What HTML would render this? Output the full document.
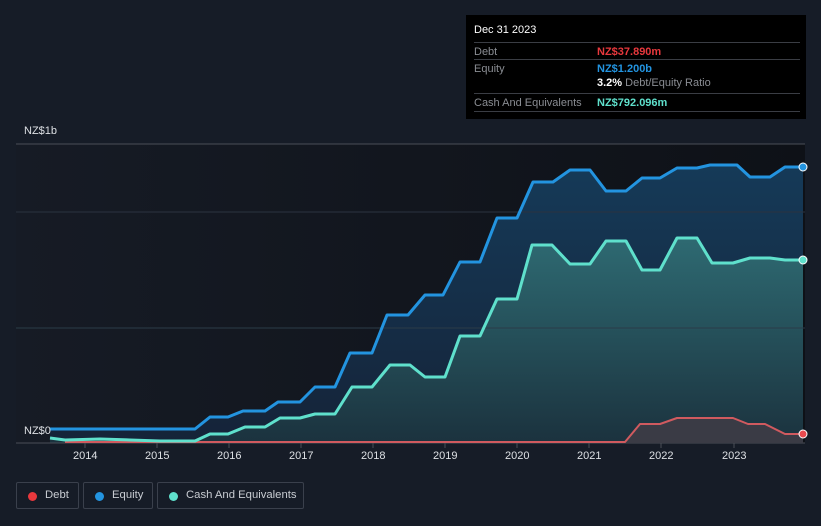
<!DOCTYPE html>
<html><head><meta charset="utf-8"><style>
html,body{margin:0;width:821px;height:526px;overflow:hidden}
body{background:#161c27;font-family:"Liberation Sans",sans-serif;position:relative}
.tt{position:absolute;left:466px;top:15px;width:340px;height:104px;background:#000;font-size:11px}
.tt .r{position:absolute;left:8px;right:6px;border-top:1px solid #3a3d44;height:18px}
.lab{color:#8a8d93;position:absolute;left:0;top:3px}
.val{position:absolute;left:123px;top:3px;font-weight:bold}
.lg{position:absolute;top:482px;height:27px;border:1px solid #3a404c;border-radius:2px;color:#c8ccd2;font-size:11.3px;line-height:25px;box-sizing:border-box;white-space:nowrap}
.lg i{position:absolute;left:11px;top:9px;width:9px;height:9px;border-radius:50%}
.ax{position:absolute;top:450px;color:#dde0e4;font-size:11px}
</style></head><body>
<svg width="821" height="526" style="position:absolute;left:0;top:0">
<defs>
<linearGradient id="bg" x1="0" x2="1" y1="0" y2="0"><stop offset="0" stop-color="#161b25"/><stop offset="1" stop-color="#0e1117"/></linearGradient>
<linearGradient id="eq" x1="0" y1="0" x2="0" y2="1"><stop offset="0" stop-color="#153a58"/><stop offset="1" stop-color="#152338"/></linearGradient>
<linearGradient id="cs" x1="0" y1="0" x2="0" y2="1"><stop offset="0" stop-color="#2e6a72"/><stop offset="1" stop-color="#1b323e"/></linearGradient>
</defs>
<rect x="16" y="144" width="789" height="299" fill="url(#bg)"/>
<path d="M50,429 L195,429 L210,417 L228,417 L243,411 L265,411 L278,402 L300,402 L315,387 L335,387 L350,353 L372,353 L387,315 L408,315 L425,295 L443,295 L460,262 L480,262 L497,218 L517,218 L533,182 L553,182 L570,170 L590,170 L606,191 L626,191 L642,178 L660,178 L677,168 L697,168 L710,165 L737,165 L750,177 L770,177 L785,167 L803,167 L803,443 L50,443Z" fill="url(#eq)"/>
<path d="M50,438 L65,440 L100,439 L130,440 L160,441 L195,441 L210,434 L228,434 L245,427 L265,427 L280,418 L300,418 L315,414 L335,414 L352,387 L372,387 L390,365 L410,365 L425,377 L445,377 L460,336 L480,336 L497,299 L517,299 L532,245 L552,245 L570,264 L590,264 L606,241 L626,241 L642,270 L660,270 L677,238 L697,238 L712,263 L733,263 L750,258 L770,258 L785,260 L803,260 L803,443 L50,443Z" fill="url(#cs)"/>
<line x1="16" y1="144" x2="805" y2="144" stroke="#4a4e57"/>
<line x1="16" y1="212" x2="805" y2="212" stroke="#2b3340"/>
<line x1="16" y1="328" x2="805" y2="328" stroke="#2b3c48"/>
<line x1="16" y1="443" x2="805" y2="443" stroke="#4a4e57"/>
<path d="M640,424 L660,424 L677,418 L733,418 L748,424 L765,424 L785,434 L803,434 L803,443 L625,443Z" fill="#3a3b45"/>
<path d="M65,442 L625,442 L640,424 L660,424 L677,418 L733,418 L748,424 L765,424 L785,434 L803,434" fill="none" stroke="#d05a5f" stroke-width="2" stroke-linejoin="round"/>
<path d="M50,438 L65,440 L100,439 L130,440 L160,441 L195,441 L210,434 L228,434 L245,427 L265,427 L280,418 L300,418 L315,414 L335,414 L352,387 L372,387 L390,365 L410,365 L425,377 L445,377 L460,336 L480,336 L497,299 L517,299 L532,245 L552,245 L570,264 L590,264 L606,241 L626,241 L642,270 L660,270 L677,238 L697,238 L712,263 L733,263 L750,258 L770,258 L785,260 L803,260" fill="none" stroke="#5fe0cc" stroke-width="3" stroke-linejoin="round"/>
<path d="M50,429 L195,429 L210,417 L228,417 L243,411 L265,411 L278,402 L300,402 L315,387 L335,387 L350,353 L372,353 L387,315 L408,315 L425,295 L443,295 L460,262 L480,262 L497,218 L517,218 L533,182 L553,182 L570,170 L590,170 L606,191 L626,191 L642,178 L660,178 L677,168 L697,168 L710,165 L737,165 L750,177 L770,177 L785,167 L803,167" fill="none" stroke="#2394e0" stroke-width="3" stroke-linejoin="round"/>
<circle cx="803" cy="167" r="4" fill="#2394e0" stroke="#fff" stroke-width="1"/>
<circle cx="803" cy="260" r="4" fill="#5fe0cc" stroke="#fff" stroke-width="1"/>
<circle cx="803" cy="434" r="4" fill="#e84a4f" stroke="#fff" stroke-width="1"/>
<g stroke="#4a4e57"><line x1="85" y1="443" x2="85" y2="448"/><line x1="157" y1="443" x2="157" y2="448"/><line x1="229" y1="443" x2="229" y2="448"/><line x1="301" y1="443" x2="301" y2="448"/><line x1="373" y1="443" x2="373" y2="448"/><line x1="445" y1="443" x2="445" y2="448"/><line x1="517" y1="443" x2="517" y2="448"/><line x1="589" y1="443" x2="589" y2="448"/><line x1="661" y1="443" x2="661" y2="448"/><line x1="734" y1="443" x2="734" y2="448"/></g>
</svg>
<div style="position:absolute;left:24px;top:125px;color:#dde0e4;font-size:11px">NZ$1b</div>
<div style="position:absolute;left:24px;top:425px;color:#dde0e4;font-size:11px">NZ$0</div>
<div class="ax" style="left:73px">2014</div><div class="ax" style="left:145px">2015</div><div class="ax" style="left:217px">2016</div><div class="ax" style="left:289px">2017</div><div class="ax" style="left:361px">2018</div><div class="ax" style="left:433px">2019</div><div class="ax" style="left:505px">2020</div><div class="ax" style="left:577px">2021</div><div class="ax" style="left:649px">2022</div><div class="ax" style="left:722px">2023</div>
<div class="tt">
<div style="position:absolute;left:8px;top:9px;color:#fff">Dec 31 2023</div>
<div class="r" style="top:27px"><span class="lab">Debt</span><span class="val" style="color:#e8383d">NZ$37.890m</span></div>
<div class="r" style="top:44px"><span class="lab">Equity</span><span class="val" style="color:#2394e0">NZ$1.200b</span></div>
<div style="position:absolute;left:131px;top:62px;color:#8a8d93"><b style="color:#fff">3.2%</b> Debt/Equity Ratio</div>
<div class="r" style="top:78px"><span class="lab">Cash And Equivalents</span><span class="val" style="color:#5fe0cc">NZ$792.096m</span></div>
<div style="position:absolute;left:8px;right:6px;top:96px;border-top:1px solid #3a3d44"></div>
</div>
<div class="lg" style="left:16px;width:63px"><i style="background:#e8383d"></i><span style="position:absolute;left:28px">Debt</span></div>
<div class="lg" style="left:83px;width:70px"><i style="background:#2394e0"></i><span style="position:absolute;left:28px">Equity</span></div>
<div class="lg" style="left:157px;width:147px"><i style="background:#5fe0cc"></i><span style="position:absolute;left:28px">Cash And Equivalents</span></div>
</body></html>
